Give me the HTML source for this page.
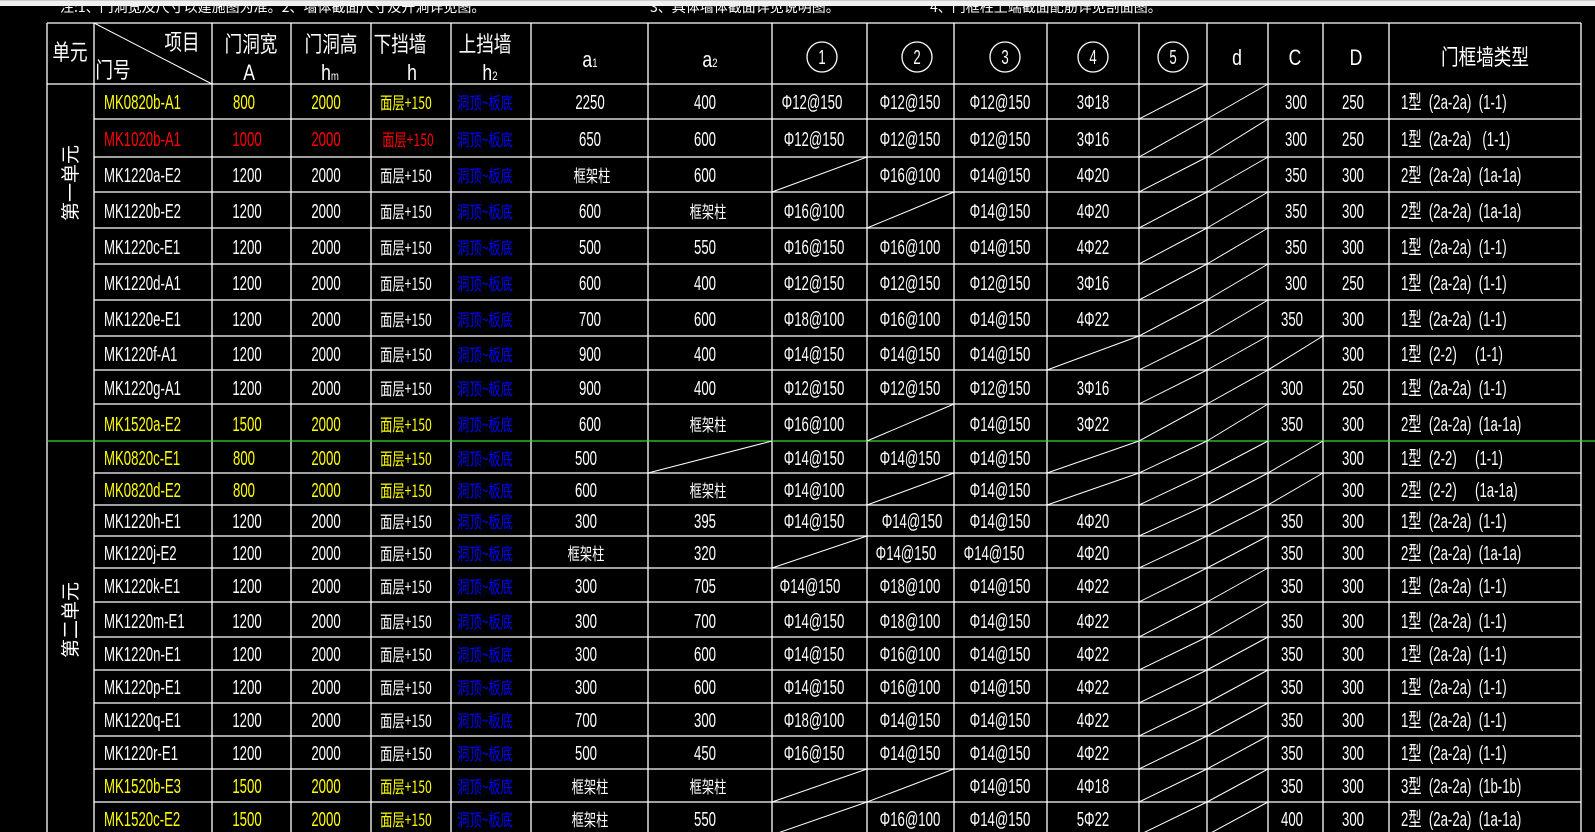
<!DOCTYPE html>
<html><head><meta charset="utf-8"><style>
html,body{margin:0;padding:0;background:#000;width:1595px;height:832px;overflow:hidden}
svg{display:block}
text{font-family:"Liberation Sans","Noto Sans CJK SC",sans-serif;font-size:20px;fill:#fff;transform-box:fill-box;transform-origin:center;transform:scaleX(.66);white-space:pre}
.l{transform-origin:left center}
.c{text-anchor:middle}
.y{fill:#ff0}.r{fill:#f00}.b{fill:#00f}
.cj{font-family:"Noto Sans CJK SC",sans-serif;font-size:17px;transform:scaleX(.72)}
.h{font-family:"Liberation Sans","Noto Sans CJK SC",sans-serif;font-size:22px;transform:scaleX(.8)}
.rt{font-family:"Noto Sans CJK SC",sans-serif;font-size:19px;transform:none}
.top{font-family:"Noto Sans CJK SC",sans-serif;font-size:14px;transform:none}
line{stroke:#fff;stroke-width:1.3}
.s line{stroke-width:1}
circle{fill:none;stroke:#fff;stroke-width:1.3}
</style></head><body>
<svg width="1595" height="832" viewBox="0 0 1595 832">
<text x="60" y="12" class="top">注:1、门洞宽及尺寸以建施图为准。2、墙体截面尺寸及开洞详见图。</text>
<text x="650" y="12" class="top">3、具体墙体截面详见说明图。</text>
<text x="930" y="12" class="top">4、门框柱上端截面配筋详见剖面图。</text>
<rect x="0" y="0" width="1595" height="6" fill="#f0f0f0"/>
<rect x="0" y="0" width="1595" height="1" fill="#ccc"/>
<g>
<line x1="47" y1="23" x2="1581" y2="23"/><line x1="47" y1="84" x2="1581" y2="84"/>
<line x1="47" y1="23" x2="47" y2="832"/><line x1="94" y1="23" x2="94" y2="832"/>
<line x1="212" y1="23" x2="212" y2="832"/><line x1="291" y1="23" x2="291" y2="832"/>
<line x1="371" y1="23" x2="371" y2="832"/><line x1="451" y1="23" x2="451" y2="832"/>
<line x1="531" y1="23" x2="531" y2="832"/><line x1="648" y1="23" x2="648" y2="832"/>
<line x1="772" y1="23" x2="772" y2="832"/><line x1="867" y1="23" x2="867" y2="832"/>
<line x1="954" y1="23" x2="954" y2="832"/><line x1="1047" y1="23" x2="1047" y2="832"/>
<line x1="1139" y1="23" x2="1139" y2="832"/><line x1="1207" y1="23" x2="1207" y2="832"/>
<line x1="1268" y1="23" x2="1268" y2="832"/><line x1="1323" y1="23" x2="1323" y2="832"/>
<line x1="1389" y1="23" x2="1389" y2="832"/><line x1="1581" y1="23" x2="1581" y2="832"/>
<line x1="94" y1="119" x2="1581" y2="119"/><line x1="94" y1="157" x2="1581" y2="157"/>
<line x1="94" y1="192" x2="1581" y2="192"/><line x1="94" y1="228" x2="1581" y2="228"/>
<line x1="94" y1="264" x2="1581" y2="264"/><line x1="94" y1="300" x2="1581" y2="300"/>
<line x1="94" y1="336" x2="1581" y2="336"/><line x1="94" y1="370" x2="1581" y2="370"/>
<line x1="94" y1="404" x2="1581" y2="404"/>
<line x1="94" y1="473" x2="1581" y2="473"/><line x1="94" y1="505" x2="1581" y2="505"/>
<line x1="94" y1="536" x2="1581" y2="536"/><line x1="94" y1="568" x2="1581" y2="568"/>
<line x1="94" y1="602" x2="1581" y2="602"/><line x1="94" y1="637" x2="1581" y2="637"/>
<line x1="94" y1="670" x2="1581" y2="670"/><line x1="94" y1="703" x2="1581" y2="703"/>
<line x1="94" y1="736" x2="1581" y2="736"/><line x1="94" y1="769" x2="1581" y2="769"/>
<line x1="94" y1="802" x2="1581" y2="802"/>
<line x1="47" y1="441" x2="1595" y2="441" style="stroke:#33dd33"/>
<line x1="94" y1="23" x2="212" y2="84" style="stroke-width:1"/>
</g>
<!-- header -->
<text class="h c" x="70" y="60">单元</text>
<text class="h c" x="182" y="50">项目</text>
<text class="h c" x="113" y="78">门号</text>
<text class="h c" x="251" y="52">门洞宽</text><text class="h c" x="249" y="80">A</text>
<text class="h c" x="331" y="52">门洞高</text><text class="h c" x="330" y="80">h<tspan style="font-size:12px">m</tspan></text>
<text class="h c" x="400" y="52">下挡墙</text><text class="h c" x="412" y="80">h</text>
<text class="h c" x="485" y="52">上挡墙</text><text class="h c" x="490" y="80">h<tspan style="font-size:12px">2</tspan></text>
<text class="h c" x="590" y="67">a<tspan style="font-size:12px">1</tspan></text>
<text class="h c" x="710" y="67">a<tspan style="font-size:12px">2</tspan></text>
<circle cx="822" cy="57" r="15"/><text class="c" x="822" y="64">1</text>
<circle cx="917" cy="57" r="15"/><text class="c" x="917" y="64">2</text>
<circle cx="1005" cy="57" r="15"/><text class="c" x="1005" y="64">3</text>
<circle cx="1093" cy="57" r="15"/><text class="c" x="1093" y="64">4</text>
<circle cx="1173" cy="57" r="15"/><text class="c" x="1173" y="64">5</text>
<text class="h c" x="1237" y="65">d</text>
<text class="h c" x="1295" y="65">C</text>
<text class="h c" x="1356" y="65">D</text>
<text class="h c" x="1485" y="65">门框墙类型</text>
<g transform="translate(77,183) rotate(-90)"><text class="c rt" x="0" y="0">第一单元</text></g>
<g transform="translate(77,620) rotate(-90)"><text class="c rt" x="0" y="0">第二单元</text></g>
<!-- slashes -->
<g class="s">
<line x1="1139" y1="119" x2="1207" y2="84"/><line x1="1207" y1="119" x2="1268" y2="84"/>
<line x1="1139" y1="157" x2="1207" y2="119"/><line x1="1207" y1="157" x2="1268" y2="119"/>
<line x1="1139" y1="192" x2="1207" y2="157"/><line x1="1207" y1="192" x2="1268" y2="157"/><line x1="772" y1="192" x2="867" y2="157"/>
<line x1="1139" y1="228" x2="1207" y2="192"/><line x1="1207" y1="228" x2="1268" y2="192"/><line x1="867" y1="228" x2="954" y2="192"/>
<line x1="1139" y1="264" x2="1207" y2="228"/><line x1="1207" y1="264" x2="1268" y2="228"/>
<line x1="1139" y1="300" x2="1207" y2="264"/><line x1="1207" y1="300" x2="1268" y2="264"/>
<line x1="1139" y1="336" x2="1207" y2="300"/><line x1="1207" y1="336" x2="1268" y2="300"/>
<line x1="1047" y1="370" x2="1139" y2="336"/><line x1="1139" y1="370" x2="1207" y2="336"/><line x1="1207" y1="370" x2="1268" y2="336"/><line x1="1268" y1="370" x2="1323" y2="336"/>
<line x1="1139" y1="404" x2="1207" y2="370"/><line x1="1207" y1="404" x2="1268" y2="370"/>
<line x1="1139" y1="441" x2="1207" y2="404"/><line x1="1207" y1="441" x2="1268" y2="404"/><line x1="867" y1="441" x2="954" y2="404"/>
<line x1="648" y1="473" x2="772" y2="441"/><line x1="1047" y1="473" x2="1139" y2="441"/><line x1="1139" y1="473" x2="1207" y2="441"/><line x1="1207" y1="473" x2="1268" y2="441"/><line x1="1268" y1="473" x2="1323" y2="441"/>
<line x1="867" y1="505" x2="954" y2="473"/><line x1="1047" y1="505" x2="1139" y2="473"/><line x1="1139" y1="505" x2="1207" y2="473"/><line x1="1207" y1="505" x2="1268" y2="473"/><line x1="1268" y1="505" x2="1323" y2="473"/>
<line x1="1139" y1="536" x2="1207" y2="505"/><line x1="1207" y1="536" x2="1268" y2="505"/>
<line x1="1139" y1="568" x2="1207" y2="536"/><line x1="1207" y1="568" x2="1268" y2="536"/><line x1="772" y1="568" x2="867" y2="536"/>
<line x1="1139" y1="602" x2="1207" y2="568"/><line x1="1207" y1="602" x2="1268" y2="568"/>
<line x1="1139" y1="637" x2="1207" y2="602"/><line x1="1207" y1="637" x2="1268" y2="602"/>
<line x1="1139" y1="670" x2="1207" y2="637"/><line x1="1207" y1="670" x2="1268" y2="637"/>
<line x1="1139" y1="703" x2="1207" y2="670"/><line x1="1207" y1="703" x2="1268" y2="670"/>
<line x1="1139" y1="736" x2="1207" y2="703"/><line x1="1207" y1="736" x2="1268" y2="703"/>
<line x1="1139" y1="769" x2="1207" y2="736"/><line x1="1207" y1="769" x2="1268" y2="736"/>
<line x1="1139" y1="802" x2="1207" y2="769"/><line x1="1207" y1="802" x2="1268" y2="769"/><line x1="772" y1="802" x2="867" y2="769"/><line x1="867" y1="802" x2="954" y2="769"/>
<line x1="1139" y1="835" x2="1207" y2="802"/><line x1="1207" y1="835" x2="1268" y2="802"/><line x1="772" y1="835" x2="867" y2="802"/>
</g>
<!-- rows -->
<g transform="translate(0,109)"><text class="l y" x="104">MK0820b-A1</text><text class="c y" x="244">800</text><text class="c y" x="326">2000</text><text class="c y cj" x="406">面层+150</text><text class="c b cj" x="485">洞顶~板底</text><text class="c" x="590">2250</text><text class="c" x="705">400</text><text class="c" x="812">Φ12@150</text><text class="c" x="910">Φ12@150</text><text class="c" x="1000">Φ12@150</text><text class="c" x="1093">3Φ18</text><text class="c" x="1296">300</text><text class="c" x="1353">250</text><text class="l" x="1401">1型  (2a-2a)  (1-1)</text></g>
<g transform="translate(0,146)"><text class="l r" x="104">MK1020b-A1</text><text class="c r" x="247">1000</text><text class="c r" x="326">2000</text><text class="c r cj" x="408">面层+150</text><text class="c b cj" x="485">洞顶~板底</text><text class="c" x="590">650</text><text class="c" x="705">600</text><text class="c" x="814">Φ12@150</text><text class="c" x="910">Φ12@150</text><text class="c" x="1000">Φ12@150</text><text class="c" x="1093">3Φ16</text><text class="c" x="1296">300</text><text class="c" x="1353">250</text><text class="l" x="1401">1型  (2a-2a)   (1-1)</text></g>
<g transform="translate(0,182)"><text class="l" x="104">MK1220a-E2</text><text class="c" x="247">1200</text><text class="c" x="326">2000</text><text class="c cj" x="406">面层+150</text><text class="c b cj" x="485">洞顶~板底</text><text class="c cj" x="592">框架柱</text><text class="c" x="705">600</text><text class="c" x="910">Φ16@100</text><text class="c" x="1000">Φ14@150</text><text class="c" x="1093">4Φ20</text><text class="c" x="1296">350</text><text class="c" x="1353">300</text><text class="l" x="1401">2型  (2a-2a)  (1a-1a)</text></g>
<g transform="translate(0,218)"><text class="l" x="104">MK1220b-E2</text><text class="c" x="247">1200</text><text class="c" x="326">2000</text><text class="c cj" x="406">面层+150</text><text class="c b cj" x="485">洞顶~板底</text><text class="c" x="590">600</text><text class="c cj" x="708">框架柱</text><text class="c" x="814">Φ16@100</text><text class="c" x="1000">Φ14@150</text><text class="c" x="1093">4Φ20</text><text class="c" x="1296">350</text><text class="c" x="1353">300</text><text class="l" x="1401">2型  (2a-2a)  (1a-1a)</text></g>
<g transform="translate(0,254)"><text class="l" x="104">MK1220c-E1</text><text class="c" x="247">1200</text><text class="c" x="326">2000</text><text class="c cj" x="406">面层+150</text><text class="c b cj" x="485">洞顶~板底</text><text class="c" x="590">500</text><text class="c" x="705">550</text><text class="c" x="814">Φ16@150</text><text class="c" x="910">Φ16@100</text><text class="c" x="1000">Φ14@150</text><text class="c" x="1093">4Φ22</text><text class="c" x="1296">350</text><text class="c" x="1353">300</text><text class="l" x="1401">1型  (2a-2a)  (1-1)</text></g>
<g transform="translate(0,290)"><text class="l" x="104">MK1220d-A1</text><text class="c" x="247">1200</text><text class="c" x="326">2000</text><text class="c cj" x="406">面层+150</text><text class="c b cj" x="485">洞顶~板底</text><text class="c" x="590">600</text><text class="c" x="705">400</text><text class="c" x="814">Φ12@150</text><text class="c" x="910">Φ12@150</text><text class="c" x="1000">Φ12@150</text><text class="c" x="1093">3Φ16</text><text class="c" x="1296">300</text><text class="c" x="1353">250</text><text class="l" x="1401">1型  (2a-2a)  (1-1)</text></g>
<g transform="translate(0,326)"><text class="l" x="104">MK1220e-E1</text><text class="c" x="247">1200</text><text class="c" x="326">2000</text><text class="c cj" x="406">面层+150</text><text class="c b cj" x="485">洞顶~板底</text><text class="c" x="590">700</text><text class="c" x="705">600</text><text class="c" x="814">Φ18@100</text><text class="c" x="910">Φ16@100</text><text class="c" x="1000">Φ14@150</text><text class="c" x="1093">4Φ22</text><text class="c" x="1292">350</text><text class="c" x="1353">300</text><text class="l" x="1401">1型  (2a-2a)  (1-1)</text></g>
<g transform="translate(0,361)"><text class="l" x="104">MK1220f-A1</text><text class="c" x="247">1200</text><text class="c" x="326">2000</text><text class="c cj" x="406">面层+150</text><text class="c b cj" x="485">洞顶~板底</text><text class="c" x="590">900</text><text class="c" x="705">400</text><text class="c" x="814">Φ14@150</text><text class="c" x="910">Φ14@150</text><text class="c" x="1000">Φ14@150</text><text class="c" x="1353">300</text><text class="l" x="1401">1型  (2-2)     (1-1)</text></g>
<g transform="translate(0,395)"><text class="l" x="104">MK1220g-A1</text><text class="c" x="247">1200</text><text class="c" x="326">2000</text><text class="c cj" x="406">面层+150</text><text class="c b cj" x="485">洞顶~板底</text><text class="c" x="590">900</text><text class="c" x="705">400</text><text class="c" x="814">Φ12@150</text><text class="c" x="910">Φ12@150</text><text class="c" x="1000">Φ12@150</text><text class="c" x="1093">3Φ16</text><text class="c" x="1292">300</text><text class="c" x="1353">250</text><text class="l" x="1401">1型  (2a-2a)  (1-1)</text></g>
<g transform="translate(0,431)"><text class="l y" x="104">MK1520a-E2</text><text class="c y" x="247">1500</text><text class="c y" x="326">2000</text><text class="c y cj" x="406">面层+150</text><text class="c b cj" x="485">洞顶~板底</text><text class="c" x="590">600</text><text class="c cj" x="708">框架柱</text><text class="c" x="814">Φ16@100</text><text class="c" x="1000">Φ14@150</text><text class="c" x="1093">3Φ22</text><text class="c" x="1292">350</text><text class="c" x="1353">300</text><text class="l" x="1401">2型  (2a-2a)  (1a-1a)</text></g>
<g transform="translate(0,465)"><text class="l y" x="104">MK0820c-E1</text><text class="c y" x="244">800</text><text class="c y" x="326">2000</text><text class="c y cj" x="406">面层+150</text><text class="c b cj" x="485">洞顶~板底</text><text class="c" x="586">500</text><text class="c" x="814">Φ14@150</text><text class="c" x="910">Φ14@150</text><text class="c" x="1000">Φ14@150</text><text class="c" x="1353">300</text><text class="l" x="1401">1型  (2-2)     (1-1)</text></g>
<g transform="translate(0,497)"><text class="l y" x="104">MK0820d-E2</text><text class="c y" x="244">800</text><text class="c y" x="326">2000</text><text class="c y cj" x="406">面层+150</text><text class="c b cj" x="485">洞顶~板底</text><text class="c" x="586">600</text><text class="c cj" x="708">框架柱</text><text class="c" x="814">Φ14@100</text><text class="c" x="1000">Φ14@150</text><text class="c" x="1353">300</text><text class="l" x="1401">2型  (2-2)     (1a-1a)</text></g>
<g transform="translate(0,528)"><text class="l" x="104">MK1220h-E1</text><text class="c" x="247">1200</text><text class="c" x="326">2000</text><text class="c cj" x="406">面层+150</text><text class="c b cj" x="485">洞顶~板底</text><text class="c" x="586">300</text><text class="c" x="705">395</text><text class="c" x="814">Φ14@150</text><text class="c" x="912">Φ14@150</text><text class="c" x="1000">Φ14@150</text><text class="c" x="1093">4Φ20</text><text class="c" x="1292">350</text><text class="c" x="1353">300</text><text class="l" x="1401">1型  (2a-2a)  (1-1)</text></g>
<g transform="translate(0,560)"><text class="l" x="104">MK1220j-E2</text><text class="c" x="247">1200</text><text class="c" x="326">2000</text><text class="c cj" x="406">面层+150</text><text class="c b cj" x="485">洞顶~板底</text><text class="c cj" x="586">框架柱</text><text class="c" x="705">320</text><text class="c" x="906">Φ14@150</text><text class="c" x="994">Φ14@150</text><text class="c" x="1093">4Φ20</text><text class="c" x="1292">350</text><text class="c" x="1353">300</text><text class="l" x="1401">2型  (2a-2a)  (1a-1a)</text></g>
<g transform="translate(0,593)"><text class="l" x="104">MK1220k-E1</text><text class="c" x="247">1200</text><text class="c" x="326">2000</text><text class="c cj" x="406">面层+150</text><text class="c b cj" x="485">洞顶~板底</text><text class="c" x="586">300</text><text class="c" x="705">705</text><text class="c" x="810">Φ14@150</text><text class="c" x="910">Φ18@100</text><text class="c" x="1000">Φ14@150</text><text class="c" x="1093">4Φ22</text><text class="c" x="1292">350</text><text class="c" x="1353">300</text><text class="l" x="1401">1型  (2a-2a)  (1-1)</text></g>
<g transform="translate(0,628)"><text class="l" x="104">MK1220m-E1</text><text class="c" x="247">1200</text><text class="c" x="326">2000</text><text class="c cj" x="406">面层+150</text><text class="c b cj" x="485">洞顶~板底</text><text class="c" x="586">300</text><text class="c" x="705">700</text><text class="c" x="814">Φ14@150</text><text class="c" x="910">Φ18@100</text><text class="c" x="1000">Φ14@150</text><text class="c" x="1093">4Φ22</text><text class="c" x="1292">350</text><text class="c" x="1353">300</text><text class="l" x="1401">1型  (2a-2a)  (1-1)</text></g>
<g transform="translate(0,661)"><text class="l" x="104">MK1220n-E1</text><text class="c" x="247">1200</text><text class="c" x="326">2000</text><text class="c cj" x="406">面层+150</text><text class="c b cj" x="485">洞顶~板底</text><text class="c" x="586">300</text><text class="c" x="705">600</text><text class="c" x="814">Φ14@150</text><text class="c" x="910">Φ16@100</text><text class="c" x="1000">Φ14@150</text><text class="c" x="1093">4Φ22</text><text class="c" x="1292">350</text><text class="c" x="1353">300</text><text class="l" x="1401">1型  (2a-2a)  (1-1)</text></g>
<g transform="translate(0,694)"><text class="l" x="104">MK1220p-E1</text><text class="c" x="247">1200</text><text class="c" x="326">2000</text><text class="c cj" x="406">面层+150</text><text class="c b cj" x="485">洞顶~板底</text><text class="c" x="586">300</text><text class="c" x="705">600</text><text class="c" x="814">Φ14@150</text><text class="c" x="910">Φ16@100</text><text class="c" x="1000">Φ14@150</text><text class="c" x="1093">4Φ22</text><text class="c" x="1292">350</text><text class="c" x="1353">300</text><text class="l" x="1401">1型  (2a-2a)  (1-1)</text></g>
<g transform="translate(0,727)"><text class="l" x="104">MK1220q-E1</text><text class="c" x="247">1200</text><text class="c" x="326">2000</text><text class="c cj" x="406">面层+150</text><text class="c b cj" x="485">洞顶~板底</text><text class="c" x="586">700</text><text class="c" x="705">300</text><text class="c" x="814">Φ18@100</text><text class="c" x="910">Φ14@150</text><text class="c" x="1000">Φ14@150</text><text class="c" x="1093">4Φ22</text><text class="c" x="1292">350</text><text class="c" x="1353">300</text><text class="l" x="1401">1型  (2a-2a)  (1-1)</text></g>
<g transform="translate(0,760)"><text class="l" x="104">MK1220r-E1</text><text class="c" x="247">1200</text><text class="c" x="326">2000</text><text class="c cj" x="406">面层+150</text><text class="c b cj" x="485">洞顶~板底</text><text class="c" x="586">500</text><text class="c" x="705">450</text><text class="c" x="814">Φ16@150</text><text class="c" x="910">Φ14@150</text><text class="c" x="1000">Φ14@150</text><text class="c" x="1093">4Φ22</text><text class="c" x="1292">350</text><text class="c" x="1353">300</text><text class="l" x="1401">1型  (2a-2a)  (1-1)</text></g>
<g transform="translate(0,793)"><text class="l y" x="104">MK1520b-E3</text><text class="c y" x="247">1500</text><text class="c y" x="326">2000</text><text class="c y cj" x="406">面层+150</text><text class="c b cj" x="485">洞顶~板底</text><text class="c cj" x="590">框架柱</text><text class="c cj" x="708">框架柱</text><text class="c" x="1000">Φ14@150</text><text class="c" x="1093">4Φ18</text><text class="c" x="1292">350</text><text class="c" x="1353">300</text><text class="l" x="1401">3型  (2a-2a)  (1b-1b)</text></g>
<g transform="translate(0,826)"><text class="l y" x="104">MK1520c-E2</text><text class="c y" x="247">1500</text><text class="c y" x="326">2000</text><text class="c y cj" x="406">面层+150</text><text class="c b cj" x="485">洞顶~板底</text><text class="c cj" x="590">框架柱</text><text class="c" x="705">550</text><text class="c" x="910">Φ16@100</text><text class="c" x="1000">Φ14@150</text><text class="c" x="1093">5Φ22</text><text class="c" x="1292">400</text><text class="c" x="1353">300</text><text class="l" x="1401">2型  (2a-2a)  (1a-1a)</text></g>
</svg>
</body></html>
